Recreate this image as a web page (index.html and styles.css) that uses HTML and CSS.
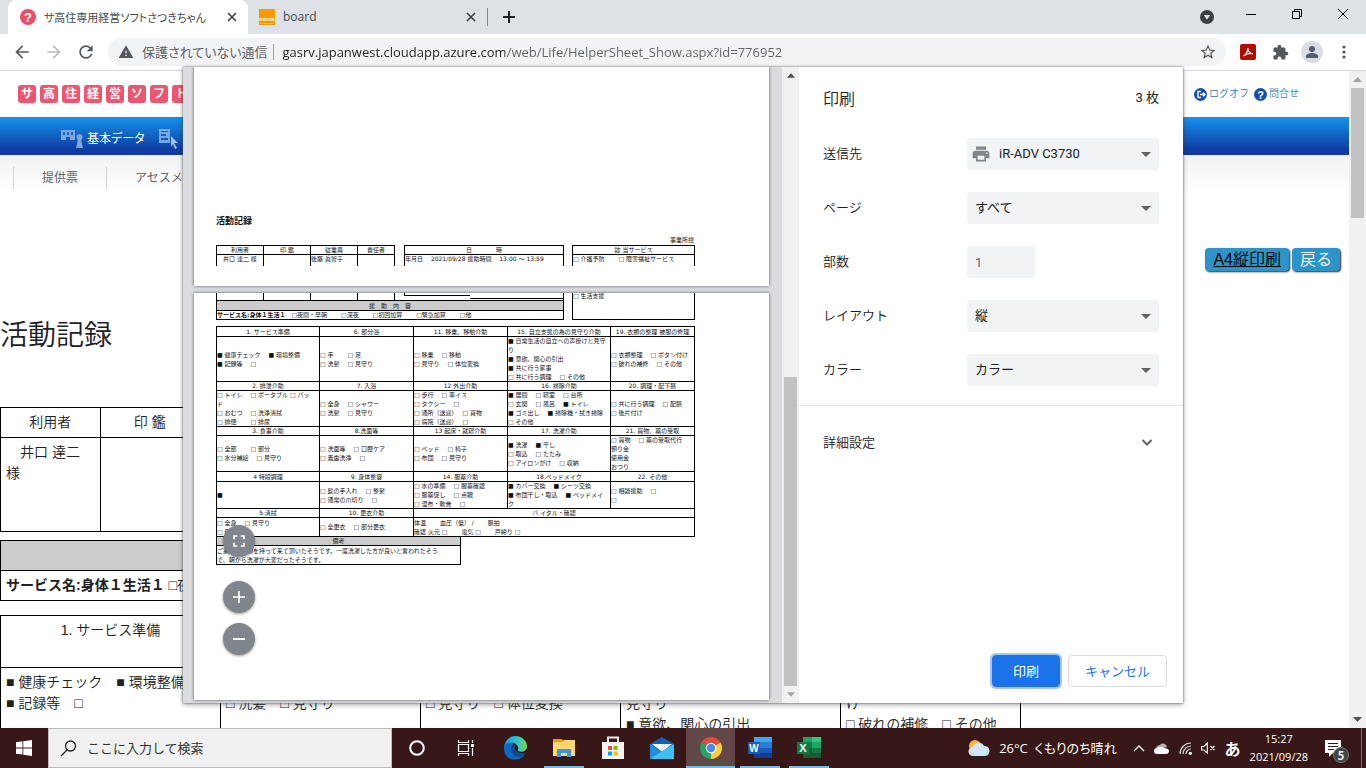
FILE: index.html
```html
<!DOCTYPE html>
<html lang="ja">
  <head>
    <title>サ高住専用経営ソフトさつきちゃん</title>
    <meta charset="utf-8" />
    <meta name="viewport" content="width=device-width, initial-scale=1.0" />
    <link rel="stylesheet" href="styles.css">
  </head>
  <body>
    <!-- Browser tabs -->
    <div class="tabstrip">
      <div class="tab active">
        <svg width="16" height="16" viewBox="0 0 16 16"><circle cx="8" cy="8" r="8" fill="#ee4f68"/><text x="8" y="13" text-anchor="middle" font-family="Liberation Sans, sans-serif" font-size="13" font-weight="bold" fill="#fff">?</text></svg>
        <span class="tab-title">サ高住専用経営ソフトさつきちゃん</span>
        <button class="tab-close" aria-label="閉じる"><svg width="10" height="10" viewBox="0 0 10 10"><path d="M1 1l8 8M9 1l-8 8" stroke="#3c4043" stroke-width="1.6"/></svg></button>
      </div>
      <div class="tab">
        <svg width="16" height="16" viewBox="0 0 16 16"><path fill="#f59b00" d="M0 0h16v16H0z"/><text x="8" y="12" text-anchor="middle" font-family="Liberation Sans, sans-serif" font-size="5" font-weight="bold" fill="#fff">norma</text><path d="M1 14.500h14" stroke="#fbd08a" stroke-width=".6"/></svg>
        <span class="tab-title latin">board</span>
        <button class="tab-close" aria-label="閉じる"><svg width="10" height="10" viewBox="0 0 10 10"><path d="M1 1l8 8M9 1l-8 8" stroke="#3c4043" stroke-width="1.600"/></svg></button>
      </div>
      <button class="new-tab" aria-label="新しいタブ"><svg width="12" height="12" viewBox="0 0 12 12"><path d="M6 0v12M0 6h12" stroke="#202124" stroke-width="2"/></svg></button>
      <div class="window-controls">
        <button class="tab-search" aria-label="タブを検索"><svg width="14" height="14" viewBox="0 0 14 14"><circle cx="7" cy="7" r="7" fill="#3c4043"/><path d="M3.800 5h6.400L7 9.800z" fill="#dee1e6"/></svg></button>
        <button aria-label="最小化"><svg width="10" height="10" viewBox="0 0 10 10"><path d="M0 5.500h10" stroke="#000"/></svg></button>
        <button aria-label="元に戻す"><svg width="10" height="10" viewBox="0 0 10 10"><path d="M.5 2.500h7v7h-7zM2.500 2.500v-2h7v7h-2" fill="none" stroke="#000"/></svg></button>
        <button aria-label="閉じる"><svg width="10" height="10" viewBox="0 0 10 10"><path d="M0 0l10 10M10 0L0 10" stroke="#000"/></svg></button>
      </div>
    </div>

    <div class="toolbar">
      <div class="tools">
        <button aria-label="戻る"><svg width="20" height="20" viewBox="0 0 24 24"><path fill="#54575b" d="M20 11H7.830l5.590-5.590L12 4l-8 8 8 8 1.410-1.410L7.830 13H20z"/></svg></button>
        <button aria-label="進む"><svg width="20" height="20" viewBox="0 0 24 24"><path fill="#bbbdc0" d="M12 4l-1.410 1.410L16.170 11H4v2h12.170l-5.580 5.590L12 20l8-8z"/></svg></button>
        <button aria-label="再読み込み"><svg width="20" height="20" viewBox="0 0 24 24"><path fill="#54575b" d="M17.650 6.350C16.200 4.900 14.210 4 12 4c-4.420 0-7.990 3.580-7.990 8s3.570 8 7.990 8c3.730 0 6.840-2.550 7.730-6h-2.080c-.82 2.330-3.040 4-5.650 4-3.310 0-6-2.690-6-6s2.690-6 6-6c1.660 0 3.140.69 4.220 1.780L13 11h7V4z"/></svg></button>
      </div>
      <div class="omnibox">
        <svg width="16" height="16" viewBox="0 0 24 24"><path fill="#54575b" d="M1 21h22L12 2zm12-3h-2v-2h2zm0-4h-2v-4h2z"/></svg>
        <label for="url">保護されていない通信</label>
        <input id="url" type="text" value="gasrv.japanwest.cloudapp.azure.com/web/Life/HelperSheet_Show.aspx?id=776952" />
        <svg width="18" height="18" viewBox="0 0 24 24"><path fill="#54575b" d="M22 9.240l-7.190-.62L12 2 9.190 8.630 2 9.240l5.460 4.730L5.820 21 12 17.270 18.180 21l-1.630-7.030zM12 15.400l-3.760 2.270 1-4.280-3.320-2.880 4.380-.38L12 6.100l1.710 4.040 4.380.38-3.320 2.880 1 4.280z"/></svg>
      </div>
      <div class="tools">
        <button aria-label="PDF"><svg width="16" height="16" viewBox="0 0 16 16"><rect width="16" height="16" rx="2" fill="#b30b00"/><path d="M3.500 12c2-1 4.500-4.500 4.300-8 0 3 2.500 6 5 5.700-3-.8-6.300.3-9.300 2.300z" fill="none" stroke="#fff" stroke-width="1.200"/></svg></button>
        <button aria-label="拡張機能"><svg width="17" height="17" viewBox="0 0 24 24"><path fill="#54575b" d="M20.500 11H19V7c0-1.100-.9-2-2-2h-4V3.500C13 2.120 11.880 1 10.500 1S8 2.120 8 3.500V5H4c-1.100 0-1.990.9-1.990 2v3.800H3.500c1.490 0 2.700 1.210 2.700 2.700s-1.210 2.700-2.700 2.700H2V20c0 1.100.9 2 2 2h3.800v-1.500c0-1.490 1.210-2.700 2.700-2.700s2.700 1.210 2.700 2.700V22H17c1.100 0 2-.9 2-2v-4h1.500c1.380 0 2.500-1.120 2.500-2.500S21.880 11 20.500 11z"/></svg></button>
        <button aria-label="プロフィール"><svg width="22" height="22" viewBox="0 0 22 22"><circle cx="11" cy="11" r="11" fill="#dadde3"/><circle cx="11" cy="8" r="3" fill="#545b6c"/><path fill="#545b6c" d="M5 17v-2c0-2 4-3 6-3s6 1 6 3v2z"/></svg></button>
        <button aria-label="メニュー"><svg width="4" height="14" viewBox="0 0 4 14"><g fill="#54575b"><circle cx="2" cy="2" r="1.600"/><circle cx="2" cy="7" r="1.600"/><circle cx="2" cy="12" r="1.600"/></g></svg></button>
      </div>
    </div>

    <!-- Page behind the print dialog -->
    <div class="viewport">
      <div class="page">
        <header class="site-header">
          <div class="logo"><span>サ</span><span>高</span><span>住</span><span>経</span><span>営</span><span>ソ</span><span>フ</span><span>ト</span></div>
          <div class="user-links">
            <a href="#"><svg width="13" height="13" viewBox="0 0 13 13"><circle cx="6.500" cy="6.500" r="6.500" fill="#144fae"/><path d="M7 3.500H4v6h3M6 6.500h5M9 4.500l2 2-2 2" fill="none" stroke="#fff" stroke-width="1.400"/></svg>ログオフ</a>
            <a href="#"><svg width="13" height="13" viewBox="0 0 13 13"><circle cx="6.500" cy="6.500" r="6.500" fill="#144fae"/><text x="6.500" y="10.500" text-anchor="middle" font-family="Liberation Sans, sans-serif" font-size="11" font-weight="bold" fill="#fff">?</text></svg>問合せ</a>
          </div>
        </header>
        <nav class="main-nav">
          <a href="#"><svg width="22" height="18" viewBox="0 0 22 18"><path fill="#7ba5dd" fill-rule="evenodd" d="M0 0h14v10H9V7H5v3H0zM2 2v3h2V2zm4 0v3h2V2zm4 0v3h2V2z"/><g fill="#7ba5dd"><circle cx="18.500" cy="7" r="3"/><path d="M17 9h3l2 9h-7z"/></g></svg>基本データ</a>
          <a href="#"><svg width="20" height="20" viewBox="0 0 20 20"><path fill="#7ba5dd" fill-rule="evenodd" d="M0 0h11v14H0zM2 2v1h7V2zm0 3v2h5V5zm0 4v2h7V9z"/><path fill="#a5c1e8" d="M12 7l7 7h-4l3 5-2 1-2-5-2 3z"/></svg>アセスメント</a>
        </nav>
        <nav class="sub-nav"><a href="#">提供票</a><a href="#">アセスメント</a></nav>
        <div class="actions"><a href="#" class="btn-blue print-link">A4縦印刷</a><button class="btn-blue">戻る</button></div>
        <h1>活動記録</h1>
        <table class="record persons">
          <tr><th>利用者</th><th>印 鑑</th></tr>
          <tr><td>　井口 達二 様</td><td></td></tr>
        </table>
        <table class="record service">
          <tr><th>援　助　内　容</th></tr>
          <tr><td><b>サービス名:身体１生活１</b> □夜間・早朝</td></tr>
        </table>
        <table class="record items">
          <tr><th>1. サービス準備</th><th>6. 部分浴</th><th>11. 移乗、移動介助</th><th>15. 自立支援の為の見守り介助</th><th>19. 衣類の整理 被服の修理</th></tr>
          <tr>
            <td>■ 健康チェック　■ 環境整備<br>■ 記録等　□</td>
            <td>□ 手　□ 足<br>□ 洗髪　□ 見守り</td>
            <td>□ 移乗　□ 移動<br>□ 見守り　□ 体位変換</td>
            <td>■ 日常生活の自立への声掛けと<br>見守り<br>■ 意欲、関心の引出</td>
            <td>□ 衣類整理　□ ボタン付<br>け<br>□ 破れの補修　□ その他</td>
          </tr>
        </table>
      </div>
      <div class="scrollbar page-scroll">
        <svg width="9" height="5" viewBox="0 0 9 5"><path d="M0 5l4.500-5L9 5z" fill="#a3a3a3"/></svg>
        <div class="thumb"></div>
        <svg width="9" height="5" viewBox="0 0 9 5"><path d="M0 0l4.500 5L9 0z" fill="#505050"/></svg>
      </div>
    </div>

    <!-- Print dialog -->
    <div class="dialog" role="dialog" aria-label="印刷">
      <div class="preview">
        <div class="papers">
          <div class="paper first">
            <h2>活動記録</h2>
            <p class="copy">事業所控</p>
            <div class="sheet-head">
              <table class="sheet people">
                <tr><th>利用者</th><th>印 鑑</th><th>従業員</th><th>責任者</th></tr>
                <tr><td>　井口 達二 様</td><td></td><td>後藤 眞智子</td><td></td></tr>
              </table>
              <table class="sheet date">
                <tr><th>日　　　　時</th></tr>
                <tr><td>年月日　 2021/09/28 援助時間　 13:00 ～ 13:59</td></tr>
              </table>
              <table class="sheet kind">
                <tr><th>該 当サービス</th></tr>
                <tr><td>□ 介護予防　　 □ 障害福祉サービス</td></tr>
              </table>
            </div>
          </div>
          <div class="paper second">
            <div class="sheet-rest">
              <div class="rest-left">
                <div class="stubs"><i></i><i></i><i></i><i></i><i class="from"></i><i class="to"></i></div>
                <table class="sheet summary">
                  <tr><th class="gray">援　助　内　容</th></tr>
                  <tr><td><b>サービス名:身体１生活１</b>　□夜間・早朝　　 □深夜　　 □初回加算　　 □緊急加算　　 □他</td></tr>
                </table>
              </div>
              <div class="rest-right">□ 生活支援</div>
            </div>
            <table class="sheet care">
              <tr class="h10"><th>1. サービス準備</th><th>6. 部分浴</th><th>11. 移乗、移動介助</th><th>15. 自立支援の為の見守り介助</th><th>19. 衣類の整理 被服の修理</th></tr>
              <tr class="h45">
                <td>■ 健康チェック　 ■ 環境整備<br>■ 記録等　 □</td>
                <td>□ 手　　 □ 足<br>□ 洗髪　 □ 見守り</td>
                <td>□ 移乗　 □ 移動<br>□ 見守り　 □ 体位変換</td>
                <td>■ 日常生活の自立への声掛けと見守<br>り<br>■ 意欲、関心の引出<br>■ 共に行う家事<br>□ 共に行う調理　 □ その他</td>
                <td>□ 衣類整理　 □ ボタン付け<br>□ 破れの補修　 □ その他</td>
              </tr>
              <tr class="h9"><th>2. 排泄介助</th><th>7. 入浴</th><th>12 外出介助</th><th>16. 掃除介助</th><th>20. 調理・配下膳</th></tr>
              <tr class="h36">
                <td>□ トイレ　 □ ポータブル □ パッ<br>ド<br>□ おむつ　 □ 洗浄清拭<br>□ 排便　　 □ 排尿</td>
                <td>□ 全身　 □ シャワー<br>□ 洗髪　 □ 見守り</td>
                <td>□ 歩行　 □ 車イス<br>□ タクシー　 □<br>□ 通所（送迎）　 □ 買物<br>□ 病院（送迎）　 □</td>
                <td>■ 居間　 □ 寝室　 □ 台所<br>□ 玄関　 □ 風呂　 ■ トイレ<br>■ ゴミ出し　 ■ 掃除機・拭き掃除<br>□ その他</td>
                <td>□ 共に行う調理　 □ 配膳<br>□ 後片付け</td>
              </tr>
              <tr class="h9"><th>3. 食事介助</th><th>8.洗面等</th><th>13 起床・就寝介助</th><th>17. 洗濯介助</th><th>21. 買物、薬の受取</th></tr>
              <tr class="h36">
                <td>□ 全部　　 □ 部分<br>□ 水分補給　 □ 見守り</td>
                <td>□ 洗面等　 □ 口腔ケア<br>□ 義歯洗浄　 □</td>
                <td>□ ベッド　 □ 椅子<br>□ 布団　 □ 見守り</td>
                <td>■ 洗濯　 ■ 干し<br>□ 取込　 □ たたみ<br>□ アイロンがけ　 □ 収納</td>
                <td>□ 買物　 □ 薬の受取代行<br>預り金<br>使用金<br>おつり</td>
              </tr>
              <tr class="h10"><th>4 特段調理</th><th>9. 身体整容</th><th>14. 服薬介助</th><th>18.ベッドメイク</th><th>22. その他</th></tr>
              <tr class="h27">
                <td>■</td>
                <td>□ 髭の手入れ　 □ 整髪<br>□ 通常の爪切り　 □</td>
                <td>□ 水の準備　 □ 服薬確認<br>□ 服薬促し　 □ 点眼<br>□ 湿布・軟膏　 □</td>
                <td>■ カバー交換　 ■ シーツ交換<br>■ 布団干し・取込　 ■ ベッドメイ<br>ク</td>
                <td>□ 相談援助　 □<br>□</td>
              </tr>
              <tr class="h9"><th>5.清拭</th><th>10. 更衣介助</th><th colspan="3">バ イタル・確認</th></tr>
              <tr class="h19">
                <td>□ 全身　 □ 見守り<br>□ 部分</td>
                <td>□ 全更衣　 □ 部分更衣</td>
                <td colspan="3">体温　　 血圧（低） /　　 脈拍<br>確認 火元 □　　 電気 □　　 戸締り □</td>
              </tr>
            </table>
            <table class="sheet remarks">
              <tr class="h9"><th class="gray">備考</th></tr>
              <tr class="h19"><td>ご家族が衣類を持って来て頂いたそうです。一度洗濯した方が良いと言われたそう<br>で、朝から洗濯が大変だったそうです。</td></tr>
            </table>
          </div>
          <div class="zoom-controls">
            <button class="fit" aria-label="ページに合わせる"><svg width="20" height="20" viewBox="0 0 24 24"><path fill="#fff" d="M7 14H5v5h5v-2H7zm-2-4h2V7h3V5H5zm12 7h-3v2h5v-5h-2zM14 5v2h3v3h2V5z"/></svg></button>
            <button aria-label="拡大"><svg width="12" height="12" viewBox="0 0 12 12"><path d="M6 0v12M0 6h12" stroke="#fff" stroke-width="1.600"/></svg></button>
            <button aria-label="縮小"><svg width="12" height="12" viewBox="0 0 12 12"><path d="M0 6h12" stroke="#fff" stroke-width="2"/></svg></button>
          </div>
        </div>
        <div class="scrollbar preview-scroll">
          <svg width="8" height="5" viewBox="0 0 9 5"><path d="M0 5l4.500-5L9 5z" fill="#505050"/></svg>
          <div class="thumb"></div>
          <svg width="8" height="5" viewBox="0 0 9 5"><path d="M0 0l4.500 5L9 0z" fill="#a3a3a3"/></svg>
        </div>
      </div>

      <form class="settings">
        <div class="settings-head"><h2>印刷</h2><span>3 枚</span></div>
        <div class="row">
          <label for="dest">送信先</label>
          <div class="select has-icon">
            <svg class="printer" width="20" height="20" viewBox="0 0 24 24"><path fill="#80868b" d="M19 8H5c-1.660 0-3 1.340-3 3v6h4v4h12v-4h4v-6c0-1.660-1.340-3-3-3zm-3 11H8v-5h8zm3-7c-.55 0-1-.45-1-1s.45-1 1-1 1 .45 1 1-.45 1-1 1zm-1-9H6v4h12z"/></svg>
            <select id="dest"><option>iR-ADV C3730</option></select>
          </div>
        </div>
        <div class="row"><label for="pages">ページ</label><div class="select"><select id="pages"><option>すべて</option></select></div></div>
        <div class="row"><label for="copies">部数</label><input id="copies" type="number" min="1" value="1" /></div>
        <div class="row"><label for="layout">レイアウト</label><div class="select"><select id="layout"><option>縦</option><option>横</option></select></div></div>
        <div class="row"><label for="color">カラー</label><div class="select"><select id="color"><option>カラー</option><option>白黒</option></select></div></div>
        <button type="button" class="more">詳細設定<svg width="24" height="24" viewBox="0 0 24 24"><path d="M7.500 10l4.500 4.500 4.500-4.500" fill="none" stroke="#5f6368" stroke-width="2"/></svg></button>
        <div class="dialog-buttons"><button type="button" class="primary">印刷</button><button type="button">キャンセル</button></div>
      </form>
    </div>

    <div class="taskbar">
      <button class="start" aria-label="スタート"><svg width="16" height="16" viewBox="0 0 16 16"><path fill="#fff" d="M0 2.300L6.500 1.300v6.200H0zM7.300 1.200L16 0v7.500H7.300zM0 8.400h6.500v6.200L0 13.700zM7.300 8.400H16V16l-8.700-1.200z"/></svg></button>
      <label class="search" for="search">
        <svg width="17" height="17" viewBox="0 0 17 17"><circle cx="10.500" cy="6" r="5" fill="none" stroke="#222" stroke-width="1.300"/><path d="M7 10l-6 6" stroke="#222" stroke-width="1.300"/></svg>
        <input id="search" type="text" placeholder="ここに入力して検索" />
      </label>
      <div class="apps">
        <button aria-label="Cortana"><svg width="16" height="16" viewBox="0 0 16 16"><circle cx="8" cy="8" r="6.800" fill="none" stroke="#fff" stroke-width="2"/></svg></button>
        <button aria-label="タスクビュー"><svg width="18" height="16" viewBox="0 0 18 16"><path d="M1.500 0v2.500h10V0M1.500 16v-2.500h10V16M1.500 4.500h10v7h-10zM15.500 0v3M15.500 8v8" fill="none" stroke="#fff" stroke-width="1.200"/><path d="M14 4h3v3h-3z" fill="#fff"/></svg></button>
        <button aria-label="Edge"><svg width="24" height="24" viewBox="0 0 24 24"><defs><linearGradient id="edgeTop"><stop stop-color="#1597e5"/><stop offset=".55" stop-color="#32c3cf"/><stop offset="1" stop-color="#72d94b"/></linearGradient></defs><path fill="#0b69c5" d="M1 13C1 5 8 4 11 8c-4 2-4 11 4 12 3 0 5-1 7-2-5 9-21 7-21-5z"/><path fill="url(#edgeTop)" d="M1 11C2 4 7 0 12 0c7 0 12 5 12 10 0 5-5 7-9 5-1-1 1-2 0-4C13 5 3 5 1 11z"/><path fill="#114a8b" d="M9 14c0-3 1-5 4-5-3 5 1 9 9 8-1 3-5 4-7 4-4 0-6-3-6-7z"/></svg></button>
        <button class="open" aria-label="エクスプローラー"><svg width="22" height="20" viewBox="0 0 22 20"><path fill="#e5a200" d="M0 1h9l2 3H0z"/><path fill="#ffd869" d="M0 4h9l2-2h11v16H0z"/><path fill="#3a99dc" d="M4 11h14v8h-4v-4H8v4H4z"/></svg></button>
        <button aria-label="Store"><svg width="24" height="24" viewBox="0 0 24 24"><path d="M7 7V1.500h10V7" fill="none" stroke="#eee" stroke-width="2"/><path fill="#f4f4f4" d="M1 6h22v17H1z"/><path fill="#f25022" d="M7 10h4v4H7z"/><path fill="#7fba00" d="M12.500 10h4v4h-4z"/><path fill="#00a4ef" d="M7 15.500h4v4H7z"/><path fill="#ffb900" d="M12.500 15.500h4v4h-4z"/></svg></button>
        <button aria-label="メール"><svg width="24" height="22" viewBox="0 0 24 22"><path fill="#1261b4" d="M0 7l12-7 12 7v4H0z"/><path fill="#f4f6f8" d="M2 7h20l-10 8z"/><path fill="#1e8fe0" d="M0 7l12 8L0 22z"/><path fill="#3ac2f5" d="M24 7v15H0l12-8z"/></svg></button>
        <button class="open current" aria-label="Chrome"><svg width="22" height="22" viewBox="0 0 22 22"><path fill="#de4c3c" d="M11 11L1.500 5.500a11 11 0 0 1 19 0z"/><path fill="#fccd43" d="M11 11l9.500-5.500A11 11 0 0 1 10.500 22z"/><path fill="#27a260" d="M11 11l-.5 11a11 11 0 0 1-9-16.500z"/><circle cx="11" cy="11" r="5.200" fill="#fff"/><circle cx="11" cy="11" r="4.200" fill="#4889f4"/></svg></button>
        <button class="open" aria-label="Word"><svg width="24" height="22" viewBox="0 0 24 22"><path fill="#41a5ee" d="M6 0h18v6H6z"/><path fill="#2b7cd3" d="M6 5h18v6H6z"/><path fill="#185abd" d="M6 11h18v6H6z"/><path fill="#103f91" d="M6 16h18v5H6z"/><rect y="5" width="12" height="12" rx="1" fill="#185abd"/><text x="6" y="15" text-anchor="middle" font-family="Liberation Sans, sans-serif" font-size="10" font-weight="bold" fill="#fff">W</text></svg></button>
        <button class="open" aria-label="Excel"><svg width="24" height="22" viewBox="0 0 24 22"><path fill="#21a366" d="M6 0h9v6H6z"/><path fill="#33c481" d="M15 0h9v6h-9z"/><path fill="#107c41" d="M6 5h9v6H6z"/><path fill="#21a366" d="M15 5h9v6h-9z"/><path fill="#185c37" d="M6 11h18v10H6z"/><path fill="#107c41" d="M15 11h9v5h-9z"/><rect y="5" width="12" height="12" rx="1" fill="#107c41"/><text x="6" y="15" text-anchor="middle" font-family="Liberation Sans, sans-serif" font-size="11" font-weight="bold" fill="#fff">X</text></svg></button>
      </div>
      <div class="tray">
        <svg width="22" height="18" viewBox="0 0 22 18"><circle cx="7" cy="7" r="6" fill="#f9b73a"/><path fill="#cfe5f8" d="M5 17a4.500 4.500 0 0 1 0-9 6 6 0 0 1 11-1 5 5 0 0 1 1 10z"/></svg>
        <span class="weather">26°C&nbsp; くもりのち晴れ</span>
        <svg width="12" height="8" viewBox="0 0 12 8"><path d="M1 7l5-5 5 5" fill="none" stroke="#fff" stroke-width="1.300"/></svg>
        <svg width="16" height="11" viewBox="0 0 16 11"><path fill="#bdb5b5" d="M2 7a4 4 0 0 1 4-5 4 4 0 0 1 7 2z"/><path fill="#fff" d="M3 11a3 3 0 0 1 0-6 5 5 0 0 1 4-1l7 2a3 3 0 0 1-1 5z"/></svg>
        <svg width="13" height="13" viewBox="0 0 13 13"><path d="M1 12A11 11 0 0 1 12 1M4 12a8 8 0 0 1 8-8M7 12a5 5 0 0 1 5-5" fill="none" stroke="#ddd" stroke-width="1.200"/><circle cx="11.300" cy="11.300" r="1.600" fill="#fff"/></svg>
        <svg width="15" height="12" viewBox="0 0 15 12"><path d="M.7 4.500V8H3l3.300 3V1L3 4.500zM9.500 4l4 4M13.500 4l-4 4" fill="none" stroke="#fff" stroke-width="1.100"/></svg>
        <span class="ime">あ</span>
        <div class="clock"><span>15:27</span><span>2021/09/28</span></div>
        <button class="notice" aria-label="通知"><svg width="16" height="17" viewBox="0 0 16 17"><path fill="#fff" d="M0 0h16v13H8l-4 4v-4H0z"/><path d="M3 3.500h10M3 6.500h10M3 9.500h6" stroke="#381718"/></svg><span class="badge">5</span></button>
      </div>
    </div>
  </body>
</html>
```
FILE: styles.css
```css
* {
  box-sizing: border-box;
}
body {
  margin: 0;
  height: 100vh;
  display: flex;
  flex-direction: column;
  overflow: hidden;
  position: relative;
  background: #fff;
  color: #202124;
  font: 13px/16px "Noto Sans CJK JP", sans-serif;
}
button,
input,
select {
  font: inherit;
  color: inherit;
  margin: 0;
  padding: 0;
  border: none;
  background: none;
}
svg {
  display: block;
  flex: none;
}
a {
  color: inherit;
  text-decoration: none;
}
b {
  font-weight: 700;
}

/* tabs */
.tabstrip {
  flex: none;
  display: flex;
  height: 34px;
  padding-left: 8px;
  background: #dee1e6;
}
.tab {
  display: flex;
  align-items: center;
  gap: 8px;
  width: 239px;
  padding: 0 11px;
}
.tab.active {
  width: 240px;
  padding-left: 12px;
  background: #fff;
  border-radius: 8px 8px 0 0;
}
.tab-title {
  flex: 1;
  font-size: 11px;
  font-feature-settings: "palt";
  color: #45494d;
  white-space: nowrap;
}
.tab-title.latin {
  font-family: "Open Sans", sans-serif;
  font-size: 12px;
}
.tab-close {
  display: flex;
}
.new-tab {
  display: flex;
  align-items: center;
  height: 18px;
  margin-top: 8px;
  padding: 0 16px 0 15px;
  border-left: 1px solid #85888d;
}
.window-controls {
  display: flex;
  margin-left: auto;
}
.window-controls button {
  display: flex;
  align-items: center;
  justify-content: center;
  width: 46px;
  height: 28px;
}
.window-controls .tab-search {
  width: 42px;
  height: 34px;
}

/* toolbar */
.toolbar {
  flex: none;
  display: flex;
  align-items: center;
  gap: 6px;
  height: 37px;
  padding: 0 6px;
  border-bottom: 1px solid #d5d7da;
}
.tools {
  display: flex;
}
.tools button {
  display: flex;
  align-items: center;
  justify-content: center;
  width: 32px;
  height: 28px;
}
.omnibox {
  flex: 1;
  display: flex;
  align-items: center;
  gap: 8px;
  height: 28px;
  padding: 0 9px 0 10px;
  border-radius: 14px;
  background: #f1f3f4;
}
.omnibox label {
  padding-right: 6px;
  border-right: 1px solid #9a9da1;
  font-size: 13px;
  font-feature-settings: "palt";
  color: #5f6368;
}
.omnibox input {
  flex: 1;
  font: 13px/20px "Open Sans", sans-serif;
  color: transparent;
  background: linear-gradient(to right, #202124 223px, #5f6368 223px);
  background-clip: text;
  -webkit-background-clip: text;
}

/* page */
.viewport {
  flex: 1;
  min-height: 0;
  display: flex;
}
.page {
  flex: 1;
  overflow: hidden;
  font-family: "Liberation Sans", "Noto Sans CJK JP", sans-serif;
  font-weight: 350;
}
.site-header {
  display: flex;
  justify-content: space-between;
  align-items: center;
  height: 46px;
  padding: 0 50px 0 18px;
}
.logo {
  display: flex;
  gap: 4px;
}
.logo span {
  width: 18px;
  height: 18px;
  border-radius: 3px;
  background: #ee5570;
  color: #fff;
  font-size: 12px;
  line-height: 18px;
  font-weight: bold;
  text-align: center;
}
.user-links {
  display: flex;
  gap: 5px;
}
.user-links a {
  display: flex;
  align-items: center;
  gap: 2px;
  font-size: 10px;
  color: #3382b8;
}
.main-nav {
  display: flex;
  align-items: center;
  gap: 14px;
  height: 38px;
  padding: 6px 0 0 61px;
  background: linear-gradient(#1593ee, #0e3ca2 85%);
}
.main-nav a {
  display: flex;
  align-items: center;
  gap: 4px;
  color: #fff;
  font-size: 12px;
  font-weight: normal;
  font-feature-settings: "palt";
}
.sub-nav {
  display: flex;
  height: 38px;
  padding: 12px 0 4px 13px;
  background: linear-gradient(#f2f2f2, #fff);
}
.sub-nav a {
  padding: 0 28px;
  border-left: 1px solid #d5d5d5;
  font-size: 12px;
  line-height: 22px;
  color: #555;
}
.actions {
  display: flex;
  justify-content: flex-end;
  gap: 3px;
  margin: 55px 9px 0 0;
}
.btn-blue {
  height: 23px;
  padding: 0 8px;
  border-radius: 4px;
  background: #2e93c9;
  box-shadow: 1px 1px 2px #222;
  color: #fff;
  font-size: 16px;
  line-height: 23px;
}
.print-link {
  color: #000;
  text-decoration: underline;
}
h1 {
  margin: 44px 0 50px;
  font-size: 28px;
  line-height: 42px;
  font-weight: 350;
}
.record {
  table-layout: fixed;
  border-collapse: collapse;
  font-size: 14px;
  line-height: 21px;
}
.record th,
.record td {
  border: 1px solid #000;
  padding: 4px 5px;
  font-weight: 350;
  vertical-align: top;
}
.persons {
  width: 200px;
}
.persons td {
  height: 94px;
}
.service {
  width: 1020px;
  margin: 8px 0 14px;
}
.service th {
  background: #ccc;
}
.items {
  width: 1021px;
}
.items th {
  width: 200px;
  height: 52px;
}
.items th:first-child,
.items th:nth-child(4) {
  width: 220px;
}
.items th:last-child {
  width: 180px;
}
.items td {
  height: 120px;
}

/* scrollbars */
.scrollbar {
  flex: none;
  display: flex;
  flex-direction: column;
  align-items: center;
  width: 17px;
  padding: 6px 0;
  background: #f1f1f1;
}
.scrollbar .thumb {
  width: 13px;
  margin-bottom: auto;
  background: #c1c1c1;
}
.page-scroll .thumb {
  height: 130px;
  margin-top: 6px;
}

/* print dialog */
.dialog {
  position: absolute;
  top: 67px;
  left: 0;
  right: 0;
  width: 1000px;
  max-width: 100%;
  height: calc(100vh - 132px);
  margin: 0 auto;
  display: flex;
  background: #fff;
  box-shadow: 0 0 2px #555, 0 2px 5px rgba(0, 0, 0, 0.3);
}
.preview {
  display: flex;
  width: 616px;
  background: #dadce0;
}
.papers {
  position: relative;
  flex: 1;
  padding: 0 13px 0 11px;
  overflow: hidden;
}
.paper {
  padding: 0 22px;
  background: #fff;
  box-shadow: 0 0 3px #555;
  color: #111;
  font: 6px/9px "DejaVu Sans", "Noto Sans CJK JP", sans-serif;
}
.first {
  height: 219px;
  padding-top: 147px;
  margin-bottom: 7px;
}
.second {
  height: 407px;
}
.paper h2 {
  margin: 0;
  font-size: 9px;
  line-height: 14px;
}
.copy {
  width: 478px;
  margin: 7px 0 1px;
  text-align: right;
}
.sheet-head {
  display: flex;
  align-items: flex-start;
}
.sheet {
  table-layout: fixed;
  border-spacing: 0;
  border-right: 1px solid #000;
}
.sheet th,
.sheet td {
  padding: 0 0 0 1px;
  box-shadow: inset 1px 1px 0 #000;
  font-weight: normal;
  white-space: nowrap;
}
.sheet-head td {
  height: 12px;
  vertical-align: top;
}
.people {
  width: 179px;
}
.people th:last-child {
  width: 37px;
}
.date {
  width: 160px;
  margin: 0 8px 0 9px;
}
.kind {
  width: 123px;
}
.sheet-rest {
  display: flex;
  align-items: flex-start;
  gap: 8px;
  margin-bottom: 6px;
}
.rest-left {
  width: 348px;
}
.stubs {
  display: flex;
  height: 7px;
  border-right: 1px solid #000;
}
.stubs i {
  width: 47px;
  border-left: 1px solid #000;
}
.stubs i:nth-child(4) {
  width: 38px;
  margin-right: 9px;
  border-right: 1px solid #000;
}
.stubs .from {
  width: 66px;
  height: 3px;
  border-bottom: 1px solid #000;
}
.stubs .to {
  flex: 1;
  height: 6px;
  border-left: none;
  border-bottom: 1px solid #000;
}
.summary {
  width: 100%;
  border-bottom: 1px solid #000;
}
.summary th {
  height: 10px;
}
.sheet .gray {
  background: #ccc;
}
.rest-right {
  width: 123px;
  height: 27px;
  border: 1px solid #000;
  border-top: none;
  line-height: 6px;
}
.care {
  width: 479px;
  border-bottom: 1px solid #000;
}
.care th:nth-child(1),
.care th:nth-child(4) {
  width: 103px;
}
.care th:nth-child(5) {
  width: 84px;
}
.h9 {
  height: 9px;
}
.h10 {
  height: 10px;
}
.h19 {
  height: 19px;
}
.h27 {
  height: 27px;
}
.h36 {
  height: 36px;
}
.h45 {
  height: 45px;
}
.remarks {
  width: 245px;
  margin-top: -1px;
  border-bottom: 1px solid #000;
}
.zoom-controls {
  position: absolute;
  left: 40px;
  bottom: 48px;
  display: flex;
  flex-direction: column;
  gap: 10px;
}
.zoom-controls button {
  display: flex;
  align-items: center;
  justify-content: center;
  width: 32px;
  height: 32px;
  border-radius: 50%;
  background: #80868b;
  box-shadow: 0 1px 3px rgba(0, 0, 0, 0.4);
}
.zoom-controls .fit {
  margin-bottom: 14px;
}
.preview-scroll .thumb {
  height: 309px;
  margin-top: auto;
  margin-bottom: 6px;
}

/* print settings */
.settings {
  flex: 1;
  display: flex;
  flex-direction: column;
}
.settings-head {
  display: flex;
  justify-content: space-between;
  align-items: center;
  height: 60px;
  padding: 2px 24px 0;
}
.settings-head h2 {
  margin: 0;
  font-size: 16px;
  font-weight: 350;
}
.settings-head span,
.row input,
.row select {
  font-family: Roboto, "Noto Sans CJK JP", sans-serif;
}
.row {
  display: flex;
  align-items: center;
  height: 54px;
  padding: 0 24px;
}
.row label {
  width: 144px;
  padding-bottom: 2px;
  font-weight: 350;
}
.select {
  position: relative;
  flex: 1;
}
.select::after {
  content: "";
  position: absolute;
  top: 14px;
  right: 8px;
  border: 5px solid transparent;
  border-top-color: #5f6368;
  border-bottom: none;
  pointer-events: none;
}
.select select,
.row input {
  display: block;
  width: 100%;
  height: 32px;
  padding: 0 8px;
  border-radius: 4px;
  background: #f1f3f4;
  appearance: none;
}
.row input {
  width: 68px;
  color: #5f6368;
}
.has-icon select {
  padding-left: 32px;
}
.printer {
  position: absolute;
  top: 6px;
  left: 4px;
}
.more {
  display: flex;
  justify-content: space-between;
  align-items: center;
  height: 72px;
  margin-top: 8px;
  padding: 0 24px;
  border-top: 1px solid #e4e5e7;
  font-weight: 350;
}
.dialog-buttons {
  display: flex;
  justify-content: flex-end;
  gap: 8px;
  margin-top: auto;
  padding: 16px;
}
.dialog-buttons button {
  height: 32px;
  padding: 0 16px;
  border: 1px solid #dadce0;
  border-radius: 4px;
  color: #1a73e8;
}
.dialog-buttons .primary {
  padding: 0 20px;
  border-color: #1a73e8;
  background: #1a73e8;
  box-shadow: 0 0 0 2px #a3c7f7;
  color: #fff;
}

/* taskbar */
.taskbar {
  flex: none;
  display: flex;
  height: 40px;
  background: #381718;
  color: #fff;
}
.start {
  display: flex;
  align-items: center;
  justify-content: center;
  width: 48px;
}
.search {
  display: flex;
  align-items: center;
  gap: 10px;
  width: 344px;
  padding-left: 11px;
  border: 1px solid #bbb;
  background: #f1f1f1;
}
.search input {
  flex: 1;
  color: #333;
}
.search input::placeholder {
  color: #333;
  opacity: 1;
}
.apps {
  display: flex;
}
.apps button {
  display: flex;
  align-items: center;
  justify-content: center;
  width: 49px;
}
.apps .open {
  background: linear-gradient(#76b9ed, #76b9ed) center bottom / 40px 2px no-repeat;
}
.apps .current {
  background-color: #614748;
  background-size: 100% 2px;
}
.tray {
  display: flex;
  align-items: center;
  gap: 9px;
  margin-left: auto;
  margin-right: 4px;
  padding-right: 12px;
  border-right: 1px solid #806a6b;
}
.weather {
  margin-right: 7px;
  font-family: "Open Sans", "Noto Sans CJK JP", sans-serif;
  font-size: 13px;
  font-feature-settings: "palt";
}
.ime {
  font-size: 16px;
  font-weight: bold;
}
.clock {
  display: flex;
  flex-direction: column;
  gap: 2px;
  text-align: center;
  font-family: "Open Sans", sans-serif;
  font-size: 11px;
}
.notice {
  position: relative;
  margin-left: 8px;
  padding-right: 8px;
}
.badge {
  position: absolute;
  left: 8px;
  top: 7px;
  width: 16px;
  height: 16px;
  border-radius: 50%;
  background: #444;
  border: 1px solid #777;
  color: #fff;
  font-size: 11px;
  font-weight: bold;
  line-height: 14px;
}
```
